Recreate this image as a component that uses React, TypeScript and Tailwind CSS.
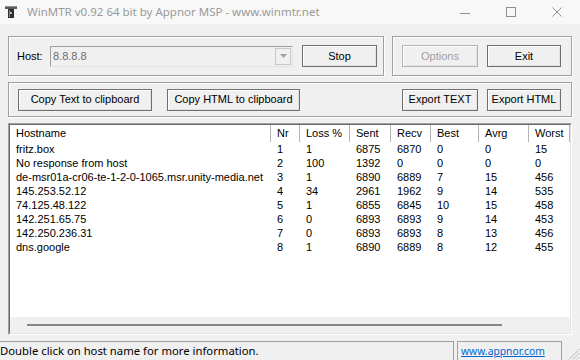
import React from "react";

type Hop = {
  host: string;
  nr: number;
  loss: number;
  sent: number;
  recv: number;
  best: number;
  avrg: number;
  worst: number;
};

const HOPS: Hop[] = [
  { host: "fritz.box", nr: 1, loss: 1, sent: 6875, recv: 6870, best: 0, avrg: 0, worst: 15 },
  { host: "No response from host", nr: 2, loss: 100, sent: 1392, recv: 0, best: 0, avrg: 0, worst: 0 },
  { host: "de-msr01a-cr06-te-1-2-0-1065.msr.unity-media.net", nr: 3, loss: 1, sent: 6890, recv: 6889, best: 7, avrg: 15, worst: 456 },
  { host: "145.253.52.12", nr: 4, loss: 34, sent: 2961, recv: 1962, best: 9, avrg: 14, worst: 535 },
  { host: "74.125.48.122", nr: 5, loss: 1, sent: 6855, recv: 6845, best: 10, avrg: 15, worst: 458 },
  { host: "142.251.65.75", nr: 6, loss: 0, sent: 6893, recv: 6893, best: 9, avrg: 14, worst: 453 },
  { host: "142.250.236.31", nr: 7, loss: 0, sent: 6893, recv: 6893, best: 8, avrg: 13, worst: 456 },
  { host: "dns.google", nr: 8, loss: 1, sent: 6890, recv: 6889, best: 8, avrg: 12, worst: 455 }
];

// column widths follow the header separators in the screenshot
const COLUMNS: { label: string; width: string; key: keyof Hop }[] = [
  { label: "Hostname", width: "w-[261px]", key: "host" },
  { label: "Nr", width: "w-[29px]", key: "nr" },
  { label: "Loss %", width: "w-[50px]", key: "loss" },
  { label: "Sent", width: "w-[41px]", key: "sent" },
  { label: "Recv", width: "w-[40px]", key: "recv" },
  { label: "Best", width: "w-[48px]", key: "best" },
  { label: "Avrg", width: "w-[50px]", key: "avrg" },
  { label: "Worst", width: "w-[41px]", key: "worst" }
];

function WinButton({
  label,
  width,
  disabled = false
}: {
  label: string;
  width: string;
  disabled?: boolean;
}): React.ReactElement {
  return (
    <button
      className={`${width} flex h-[22px] shrink-0 items-center justify-center border bg-[#f0f0f0] shadow-[inset_1px_1px_0_#ffffff,inset_-1px_-1px_0_#e3e3e3] ${
        disabled ? "border-[#b4b4b4] text-[#a0a0a0]" : "border-[#6f6f6f] text-black"
      }`}
      disabled={disabled}
      type="button"
    >
      {label}
    </button>
  );
}

function GroupBox({
  className,
  children
}: {
  className: string;
  children: React.ReactNode;
}): React.ReactElement {
  return (
    <div
      className={`${className} flex items-center border border-[#a0a0a0] shadow-[inset_1px_1px_0_#ffffff,1px_1px_0_#ffffff]`}
    >
      {children}
    </div>
  );
}

function AppIcon(): React.ReactElement {
  return (
    <svg width="14" height="14" viewBox="0 0 14 14">
      <rect x="1" y="1" width="12" height="3" fill="#5a5a5a" />
      <rect x="1" y="1" width="12" height="1" fill="#8c8c8c" />
      <rect x="4" y="4" width="6" height="9" fill="#2f2f2f" />
      <rect x="5" y="5" width="1" height="7" fill="#8a8a8a" />
      <rect x="6" y="7" width="2" height="2" fill="#b0b0b0" />
    </svg>
  );
}

export default function App(): React.ReactElement {
  return (
    <div className="flex h-[360px] w-[580px] flex-col overflow-hidden bg-[#f0f0f0] font-['Liberation_Sans',Arial,sans-serif] text-[11px] leading-none text-black">
      {/* title bar */}
      <div className="flex h-[24px] shrink-0 items-center bg-[#f8f8f8]">
        <span className="ml-[4px] flex h-[14px] w-[14px] items-center">
          <AppIcon />
        </span>
        <span className="ml-[9px] font-['Noto_Sans',sans-serif] text-[11.5px] text-[#9a9a9a]">
          WinMTR v0.92 64 bit by Appnor MSP - www.winmtr.net
        </span>
        <div className="ml-auto flex h-full items-center">
          <span className="flex h-full w-[46px] items-center justify-center">
            <span className="mt-[3px] h-px w-[10px] bg-[#8f8f8f]" />
          </span>
          <span className="flex h-full w-[46px] items-center justify-center">
            <span className="h-[10px] w-[10px] border border-[#8f8f8f]" />
          </span>
          <span className="flex h-full w-[46px] items-center justify-center">
            <svg width="10" height="10" viewBox="0 0 10 10">
              <path d="M0.5 0.5 L9.5 9.5 M9.5 0.5 L0.5 9.5" stroke="#8f8f8f" strokeWidth="1" />
            </svg>
          </span>
        </div>
      </div>

      {/* host / options row */}
      <div className="mt-[12px] flex shrink-0 gap-[8px] pl-[8px]">
        <GroupBox className="h-[40px] w-[376px]">
          <span className="ml-[8px] w-[33px]">Host:</span>
          <div className="flex h-[21px] w-[243px] items-center border border-[#a0a0a0] border-r-[#e3e3e3] border-b-[#e3e3e3] bg-[#f0f0f0]">
            <span className="flex-1 pl-[2px] text-[#6d6d6d]">8.8.8.8</span>
            <span className="mr-px flex h-[17px] w-[16px] items-center justify-center border border-[#c8c8c8] bg-[#f0f0f0]">
              <svg width="7" height="4" viewBox="0 0 7 4">
                <path d="M0 0 H7 L3.5 4 Z" fill="#a0a0a0" />
              </svg>
            </span>
          </div>
          <div className="ml-[9px]">
            <WinButton label="Stop" width="w-[75px]" />
          </div>
        </GroupBox>
        <GroupBox className="h-[40px] w-[180px] gap-[9px] pl-[9px]">
          <WinButton label="Options" width="w-[76px]" disabled />
          <WinButton label="Exit" width="w-[74px]" />
        </GroupBox>
      </div>

      {/* clipboard / export row */}
      <div className="mt-[6px] flex shrink-0 pl-[8px]">
        <GroupBox className="h-[35px] w-[564px]">
          <div className="ml-[9px] flex gap-[15px]">
            <WinButton label="Copy Text to clipboard" width="w-[134px]" />
            <WinButton label="Copy HTML to clipboard" width="w-[133px]" />
          </div>
          <div className="ml-auto mr-[10px] flex gap-[9px]">
            <WinButton label="Export TEXT" width="w-[76px]" />
            <WinButton label="Export HTML" width="w-[74px]" />
          </div>
        </GroupBox>
      </div>

      {/* results list */}
      <div className="ml-[8px] mt-[6px] h-[212px] w-[564px] shrink-0 border border-[#a0a0a0] border-r-white border-b-white">
        <div className="flex h-full flex-col border border-[#696969] border-r-[#e3e3e3] border-b-[#e3e3e3] bg-white">
          <div className="flex h-[17px] shrink-0">
            {COLUMNS.map((c) => (
              <div
                key={c.label}
                className={`${c.width} flex shrink-0 items-center border-r border-[#b4b4b4] pl-[6px]`}
              >
                {c.label}
              </div>
            ))}
          </div>
          <div className="flex-1">
            {HOPS.map((hop) => (
              <div key={hop.nr} className="flex h-[14px] items-center">
                {COLUMNS.map((c) => (
                  <div
                    key={c.label}
                    className={`${c.width} shrink-0 overflow-hidden whitespace-nowrap pl-[6px]`}
                  >
                    {hop[c.key]}
                  </div>
                ))}
              </div>
            ))}
          </div>
          <div className="flex h-[16px] shrink-0 items-center bg-[#f0f0f0]">
            <span className="ml-[17px] h-[2px] w-[475px] bg-[#858585]" />
          </div>
        </div>
      </div>

      {/* status bar */}
      <div className="mt-[6px] flex h-[19px] shrink-0 font-['Noto_Sans',sans-serif] text-[11.3px]">
        <div className="flex w-[454px] items-center border-t border-r border-[#a0a0a0]">
          Double click on host name for more information.
        </div>
        <div className="ml-[3px] flex w-[105px] items-center border-t border-r border-l border-[#a0a0a0] pl-[3px]">
          <span className="text-[10.3px] text-[#0066cc] underline">www.appnor.com</span>
        </div>
        <div className="ml-auto flex items-end">
          <svg width="12" height="12" viewBox="0 0 12 12">
            <path d="M11.5 1 L1 11.5 M11.5 5 L5 11.5 M11.5 9 L9 11.5" stroke="#b8b8b8" strokeWidth="1" />
          </svg>
        </div>
      </div>
    </div>
  );
}
